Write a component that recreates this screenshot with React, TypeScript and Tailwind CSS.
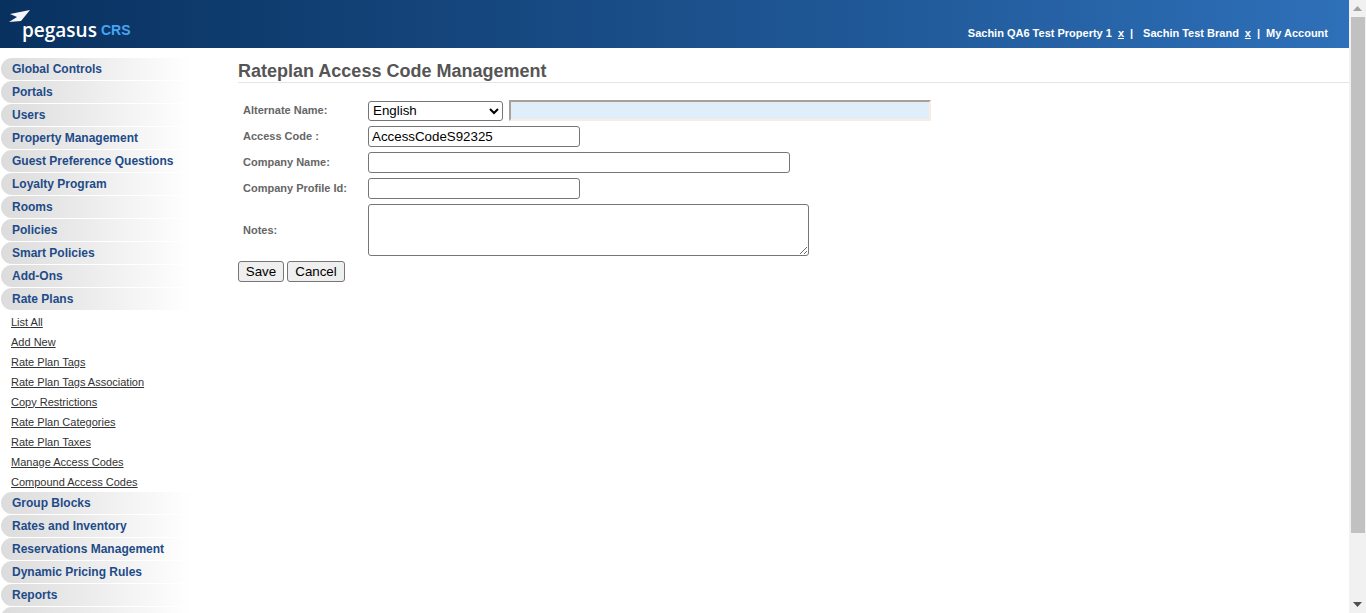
const topLinks = [
  'Global Controls',
  'Portals',
  'Users',
  'Property Management',
  'Guest Preference Questions',
  'Loyalty Program',
  'Rooms',
  'Policies',
  'Smart Policies',
  'Add-Ons',
  'Rate Plans',
];

const subLinks = [
  'List All',
  'Add New',
  'Rate Plan Tags',
  'Rate Plan Tags Association',
  'Copy Restrictions',
  'Rate Plan Categories',
  'Rate Plan Taxes',
  'Manage Access Codes',
  'Compound Access Codes',
];

const bottomLinks = ['Group Blocks', 'Rates and Inventory', 'Reservations Management', 'Dynamic Pricing Rules', 'Reports', ''];

function NavItem({ label }: { label: string }) {
  return (
    <a className="flex h-[22px] w-[190px] shrink-0 items-center rounded-l-[11px] bg-gradient-to-r from-[#dcdcdc] to-white pl-[11px] text-[12px] font-bold text-[#1e4b88]">
      {label}
    </a>
  );
}

function FormRow({ label, height, children }: { label: string; height: string; children: React.ReactNode }) {
  return (
    <div className={`flex items-center ${height}`}>
      <label className="w-[130px] shrink-0 pl-[5px] text-[11px] font-bold text-[#666]">{label}</label>
      {children}
    </div>
  );
}

export default function App() {
  return (
    <div className="flex h-[613px] w-[1366px] overflow-hidden bg-white font-['Liberation_Sans',Arial,sans-serif]">
      <div className="flex min-w-0 flex-1 flex-col">
        <header className="flex h-12 shrink-0 items-start justify-between bg-gradient-to-r from-[#08315f] to-[#2e70b9]">
          <div className="relative ml-[9px] mt-[10px] h-[30px] w-[125px]">
            <svg className="absolute left-0 top-0" width="22" height="13" viewBox="0 0 22 13">
              <path d="M21 0 L1 4 L8 7 L0 12 L12 11 Z" fill="#f4f6f8" />
            </svg>
            <span className="absolute left-[13px] top-[6px] font-['Open_Sans',sans-serif] text-[19px] font-semibold leading-[28px] text-white">pegasus</span>
            <span className="absolute left-[92px] top-[12px] text-[14px] font-bold leading-[16px] text-[#45a5f2]">CRS</span>
          </div>
          <div className="mr-[21px] mt-[26px] flex text-[11px] font-bold leading-[14px] text-white">
            <span>Sachin QA6 Test Property 1</span>
            <a className="ml-[6px] underline">x</a>
            <span className="ml-[6px]">|</span>
            <span className="ml-[10px]">Sachin Test Brand</span>
            <a className="ml-[6px] underline">x</a>
            <span className="ml-[6px]">|</span>
            <span className="ml-[6px]">My Account</span>
          </div>
        </header>

        <div className="flex min-h-0 flex-1">
          <nav className="flex w-[238px] shrink-0 flex-col gap-px pl-px pt-[10px]">
            {topLinks.map((label) => (
              <NavItem key={label} label={label} />
            ))}
            <ul className="flex h-[180px] shrink-0 flex-col pt-px">
              {subLinks.map((label) => (
                <li key={label} className="flex h-5 shrink-0 items-center pl-[10px] text-[11px] text-[#333] underline">
                  {label}
                </li>
              ))}
            </ul>
            {bottomLinks.map((label, i) => (
              <NavItem key={i} label={label} />
            ))}
          </nav>

          <main className="min-w-0 flex-1 pt-[10px]">
            <h1 className="h-[25px] border-b border-[#e5e5e5] text-[18px] font-bold leading-[26px] text-[#555]">
              Rateplan Access Code Management
            </h1>
            <form className="mt-[17px] flex flex-col">
              <FormRow label="Alternate Name:" height="h-[21px]">
                <select className="h-[20px] w-[135px] rounded-[3px] border border-[#767676] bg-white text-[13.333px] text-black">
                  <option>English</option>
                </select>
                <input
                  readOnly
                  className="ml-[6px] h-[21px] w-[422px] border-2 border-b-[#f9ece3] border-l-[#a89f98] border-r-[#f9ece3] border-t-[#a89f98] bg-[#e0eefa]"
                />
              </FormRow>
              <div className="mt-[5px] flex flex-col gap-[5px]">
                <FormRow label="Access Code :" height="h-[21px]">
                  <input
                    readOnly
                    value="AccessCodeS92325"
                    className="h-[21px] w-[212px] rounded-[3px] border border-[#767676] px-[3px] text-[13.333px] text-black"
                  />
                </FormRow>
                <FormRow label="Company Name:" height="h-[21px]">
                  <input readOnly className="h-[21px] w-[422px] rounded-[3px] border border-[#767676]" />
                </FormRow>
                <FormRow label="Company Profile Id:" height="h-[21px]">
                  <input readOnly className="h-[21px] w-[212px] rounded-[3px] border border-[#767676]" />
                </FormRow>
                <FormRow label="Notes:" height="h-[52px]">
                  <textarea readOnly className="h-[52px] w-[441px] resize rounded-[3px] border border-[#767676]" />
                </FormRow>
              </div>
              <div className="mt-[5px] flex gap-[3px]">
                <button type="button" className="h-[21px] w-[46px] rounded-[3px] border border-[#767676] bg-[#efefef] text-[13.333px] text-black">
                  Save
                </button>
                <button type="button" className="h-[21px] w-[58px] rounded-[3px] border border-[#767676] bg-[#efefef] text-[13.333px] text-black">
                  Cancel
                </button>
              </div>
            </form>
          </main>
        </div>
      </div>

      <div className="flex h-full w-[17px] shrink-0 flex-col items-center bg-[#f1f1f1]">
        <div className="flex h-[17px] w-full shrink-0 items-center justify-center">
          <svg width="9" height="5" viewBox="0 0 9 5">
            <path d="M4.5 0 L9 5 L0 5 Z" fill="#a3a3a3" />
          </svg>
        </div>
        <div className="h-[516px] w-[14px] shrink-0 bg-[#c1c1c1]" />
        <div className="mt-auto flex h-[17px] w-full shrink-0 items-center justify-center">
          <svg width="9" height="5" viewBox="0 0 9 5">
            <path d="M0 0 L9 0 L4.5 5 Z" fill="#505050" />
          </svg>
        </div>
      </div>
    </div>
  );
}
